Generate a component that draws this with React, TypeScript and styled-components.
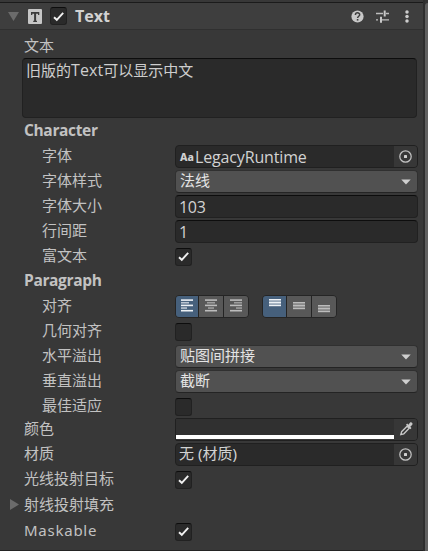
import React from 'react';
import styled, { createGlobalStyle, css } from 'styled-components';

const GlobalStyle = createGlobalStyle`
  * { box-sizing: border-box; }
  body { margin: 0; background: #383838; overflow: hidden; }
`;

const Window = styled.div`
  display: flex;
  width: 428px;
  height: 551px;
  background: #383838;
  color: #c2c2c2;
  font: 15px/20px "Noto Sans", "Noto Sans CJK SC", sans-serif;
  white-space: nowrap;
`;
const Panel = styled.main`
  flex: 1;
  display: flex;
  flex-direction: column;
  border-bottom: 1px solid #232323;
`;
const Scrollbar = styled.div`
  width: 5px;
  padding-top: 3px;
  border-left: 2px solid #2e2e2e;
  background: #343434;
`;
const Thumb = styled.div`
  height: 100%;
  border-top-left-radius: 3px;
  background: #606060;
`;
const Header = styled.header`
  display: flex;
  align-items: center;
  height: 28px;
  margin-top: 2px;
  padding: 0 10px 0 8px;
  background: #3e3e3e;
  border-top: 1px solid #1b1b1b;
  border-bottom: 1px solid #303030;
`;
const TextIcon = styled.svg`
  margin: 0 8px 0 9px;
`;
const Title = styled.h1`
  flex: 1;
  margin: 0 0 0 8px;
  font: 700 16px/20px "Open Sans", "Noto Sans", sans-serif;
  color: #d2d2d2;
`;
const Actions = styled.div`
  display: flex;
  align-items: center;
  gap: 12px;
`;
const TextLabel = styled.div`
  height: 28px;
  padding: 5px 0 0 24px;
`;
const inset = css`
  background: #2a2a2a;
  border: 1px solid #212121;
  border-top-color: #0d0d0d;
  border-radius: 4px;
`;
const TextArea = styled.div`
  ${inset}
  height: 60px;
  margin: 0 6px 0 22px;
  padding: 1px 3px;
  color: #cecece;
`;
const TypedLatin = styled.span`
  font-family: "Open Sans", "Noto Sans", sans-serif;
  font-size: 16px;
  letter-spacing: 0.1px;
`;
const Section = styled.h2<{ $h: number }>`
  height: ${p => p.$h}px;
  margin: 0;
  padding: ${p => p.$h - 24}px 0 0 24px;
  font: 700 15.5px/20px "Open Sans", "Noto Sans", sans-serif;
  letter-spacing: -0.35px;
`;
const Rows = styled.div`
  display: flex;
  flex-direction: column;
`;
const RowBox = styled.div<{ $h: number; $lift?: boolean }>`
  display: grid;
  grid-template-columns: 175px 243px;
  align-items: center;
  height: ${p => p.$h}px;
  ${p => p.$lift && css`margin-top: -2px;`}
`;
const Label = styled.div<{ $nested?: boolean; $spaced?: boolean }>`
  display: flex;
  align-items: center;
  gap: 5px;
  padding-left: ${p => (p.$nested ? 42 : 24)}px;
  padding-bottom: 3px;
  letter-spacing: ${p => (p.$spaced ? 0.75 : 0)}px;
`;
const FoldLabel = styled(Label)`
  padding-left: 10px;
  padding-bottom: 1px;
`;
const Check = styled.div`
  ${inset}
  display: grid;
  place-items: center;
  width: 17px;
  height: 18px;
  border-radius: 3px;
  ${RowBox} & { margin-top: 1px; padding-bottom: 1px; }
`;
const Input = styled.div<{ $raised?: boolean }>`
  ${inset}
  display: flex;
  align-items: center;
  height: 23px;
  padding-left: 3px;
  color: #d2d2d2;
  ${p => p.$raised && css`border-color: #202020;`}
`;
const InputText = styled.span`
  flex: 1;
  padding-bottom: 3px;
`;
const LatinText = styled(InputText)<{ $tracking?: number }>`
  padding-bottom: 0;
  font-family: "Open Sans", "Noto Sans", sans-serif;
  font-size: 16px;
  letter-spacing: ${p => p.$tracking ?? -0.3}px;
`;
const FontBadge = styled.span`
  width: 16px;
  padding-left: 1px;
  font-size: 10.5px;
  font-weight: 800;
`;
const Picker = styled.div`
  display: grid;
  place-items: center;
  width: 23px;
  height: 21px;
  background: #373737;
  border-radius: 0 3px 3px 0;
`;
const Select = styled.div`
  display: flex;
  align-items: center;
  justify-content: space-between;
  height: 23px;
  padding: 0 6px 0 4px;
  color: #e4e4e4;
  background: #515151;
  border: 1px solid #303030;
  border-bottom-color: #242424;
  border-radius: 4px;
`;
const SelectText = styled.span`
  padding-bottom: 3px;
`;
const ColorField = styled.div`
  display: flex;
  height: 23px;
  border: 1px solid #202020;
  border-radius: 2px 4px 4px 2px;
`;
const Swatch = styled.div`
  flex: 1;
  height: 20px;
  background: #303030;
  border-bottom: 4px solid #fff;
`;
const Groups = styled.div`
  display: flex;
  gap: 13px;
`;
const Group = styled.div`
  display: flex;
  height: 23px;
  border: 1px solid #252525;
  border-radius: 4px;
  overflow: hidden;
`;
const Segment = styled.div<{ $on?: boolean }>`
  width: 25px;
  padding: 3px 0 0 6px;
  line-height: 0;
  background: ${p => (p.$on ? '#46607c' : '#585858')};
  color: ${p => (p.$on ? '#edf1f5' : '#bcbcbc')};
  & + & { border-left: 1px solid #242424; }
  &:first-child { width: 22px; padding-left: 5px; }
`;
const VerticalGroup = styled(Group)`
  ${Segment} { padding-left: 5px; }
  ${Segment}:first-child { width: 23px; }
`;

function Checkbox({ checked = false }: { checked?: boolean }) {
  return (
    <Check>
      {checked && (
        <svg width="13" height="13" viewBox="0 0 13 13">
          <path d="M2 7.2 4.8 9.8 11.2 2.8" fill="none" stroke="#f0f0f0" strokeWidth="1.9" />
        </svg>
      )}
    </Check>
  );
}
const Target = () => (
  <svg width="15" height="15" viewBox="0 0 15 15">
    <circle cx="7.5" cy="7.5" r="5.7" fill="none" stroke="#c2c2c2" strokeWidth="1.25" />
    <rect x="6" y="6" width="3" height="3" rx=".6" fill="#d0d0d0" />
  </svg>
);
const Caret = () => (
  <svg width="10" height="6" viewBox="0 0 10 6"><path d="M.3.4h9.4L5 5.6z" fill="#cfcfcf" /></svg>
);
const DropperIcon = styled.svg`
  margin: 0 0 2px 2px;
`;
const Dropper = () => (
  <DropperIcon width="15" height="15" viewBox="0 0 15 15">
    <path d="m8.1 5.2 2.1 2.1-5.4 5.5-3 .7.8-2.8z" fill="none" stroke="#c8c8c8" strokeWidth="1.3" />
    <path d="m7 3.7 1.2-1.1 1.2 1.1 1.7-2.1c1-1 3.2.5 2.2 2.2l-2 1.9 1.2 1.2-1.2 1.3z" fill="#c8c8c8" />
  </DropperIcon>
);

const lineWidths = [12, 8, 12, 6, 12];
function HorizontalIcon({ align }: { align: number }) {
  return (
    <svg width="13" height="14" viewBox="0 0 13 14">
      {lineWidths.map((w, i) => (
        <rect key={i} x={(12 - w) * align} y={0.3 + i * 2.65} width={w} height="1.6"
          fill="currentColor" opacity={i % 2 ? 0.7 : 1} />
      ))}
    </svg>
  );
}
function VerticalIcon({ top }: { top: number }) {
  return (
    <svg width="14" height="16" viewBox="0 0 14 16">
      <rect x="1" y={top} width="12" height="7" fill="currentColor" opacity=".5" />
      {[0, 3, 6].map(y => (
        <rect key={y} x="1" y={top + y} width="12" height="1.2" fill="currentColor" />
      ))}
    </svg>
  );
}

interface RowProps {
  label: string;
  nested?: boolean;
  spaced?: boolean;
  lift?: boolean;
  h?: number;
  children?: React.ReactNode;
}
const Row = ({ label, nested, spaced, lift, h = 25, children }: RowProps) => (
  <RowBox $h={h} $lift={lift}>
    <Label $nested={nested} $spaced={spaced}>{label}</Label>
    {children}
  </RowBox>
);
const Dropdown = ({ value }: { value: string }) => (
  <Select><SelectText>{value}</SelectText><Caret /></Select>
);

export default function App() {
  return (
    <>
      <GlobalStyle />
      <Window>
        <Panel>
          <Header>
            <svg width="11" height="9" viewBox="0 0 11 9"><path d="M0 0h11L5.5 9z" fill="#6b6b6b" /></svg>
            <TextIcon width="14" height="15" viewBox="0 0 14 15">
              <rect width="14" height="15" rx="1" fill="#c6c6c6" />
              <path d="M3 3h8.3v3H10V4.7H8.1v7H9V13H5.2v-1.3h.9v-7H4.3V6H3z" fill="#3c3c3c" />
            </TextIcon>
            <Checkbox checked />
            <Title>Text</Title>
            <Actions>
              <svg width="13" height="13" viewBox="0 0 13 13">
                <circle cx="6.5" cy="6.5" r="6.1" fill="#c8c8c8" />
                <path d="M4.4 5c0-2.9 4.3-2.7 4.3-.3C8.7 6.2 6.6 6.3 6.6 8" fill="none" stroke="#3e3e3e" strokeWidth="1.5" />
                <rect x="5.8" y="9" width="1.6" height="1.6" fill="#3e3e3e" />
              </svg>
              <svg width="13" height="13" viewBox="0 0 13 13">
                <path d="M0 3.5h7M10 3.5h3M0 9.8h2M6 9.8h7" stroke="#bdbdbd" strokeWidth="1.3" />
                <path d="M8.7.5v6M5 6.8v6" stroke="#c8c8c8" strokeWidth="2" />
              </svg>
              <svg width="12" height="13" viewBox="0 0 12 13" fill="#cdcdcd">
                <circle cx="6" cy="1.9" r="1.75" />
                <circle cx="6" cy="6.5" r="1.75" />
                <circle cx="6" cy="11.1" r="1.75" />
              </svg>
            </Actions>
          </Header>
          <TextLabel>文本</TextLabel>
          <TextArea>旧版的<TypedLatin>Text</TypedLatin>可以显示中文</TextArea>
          <Section $h={26}>Character</Section>
          <Rows>
            <Row label="字体" nested>
              <Input $raised>
                <FontBadge>Aa</FontBadge>
                <LatinText $tracking={-0.15}>LegacyRuntime</LatinText>
                <Picker><Target /></Picker>
              </Input>
            </Row>
            <Row label="字体样式" nested><Dropdown value="法线" /></Row>
            <Row label="字体大小" nested><Input><LatinText>103</LatinText></Input></Row>
            <Row label="行间距" nested><Input><LatinText>1</LatinText></Input></Row>
            <Row label="富文本" nested><Checkbox checked /></Row>
          </Rows>
          <Section $h={25}>Paragraph</Section>
          <Rows>
            <Row label="对齐" nested>
              <Groups>
                <Group>
                  <Segment $on><HorizontalIcon align={0} /></Segment>
                  <Segment><HorizontalIcon align={0.5} /></Segment>
                  <Segment><HorizontalIcon align={1} /></Segment>
                </Group>
                <VerticalGroup>
                  <Segment $on><VerticalIcon top={0} /></Segment>
                  <Segment><VerticalIcon top={3} /></Segment>
                  <Segment><VerticalIcon top={6} /></Segment>
                </VerticalGroup>
              </Groups>
            </Row>
            <Row label="几何对齐" nested><Checkbox /></Row>
            <Row label="水平溢出" nested><Dropdown value="贴图间拼接" /></Row>
            <Row label="垂直溢出" nested><Dropdown value="截断" /></Row>
            <Row label="最佳适应" nested><Checkbox /></Row>
            <Row label="颜色" lift>
              <ColorField><Swatch /><Picker><Dropper /></Picker></ColorField>
            </Row>
            <Row label="材质">
              <Input $raised><InputText>无 (材质)</InputText><Picker><Target /></Picker></Input>
            </Row>
            <Row label="光线投射目标" h={24}><Checkbox checked /></Row>
            <RowBox $h={27}>
              <FoldLabel>
                <svg width="9" height="11" viewBox="0 0 9 11"><path d="M0 0v11l9-5.5z" fill="#6b6b6b" /></svg>
                射线投射填充
              </FoldLabel>
            </RowBox>
            <Row label="Maskable" spaced h={27}><Checkbox checked /></Row>
          </Rows>
        </Panel>
        <Scrollbar><Thumb /></Scrollbar>
      </Window>
    </>
  );
}
